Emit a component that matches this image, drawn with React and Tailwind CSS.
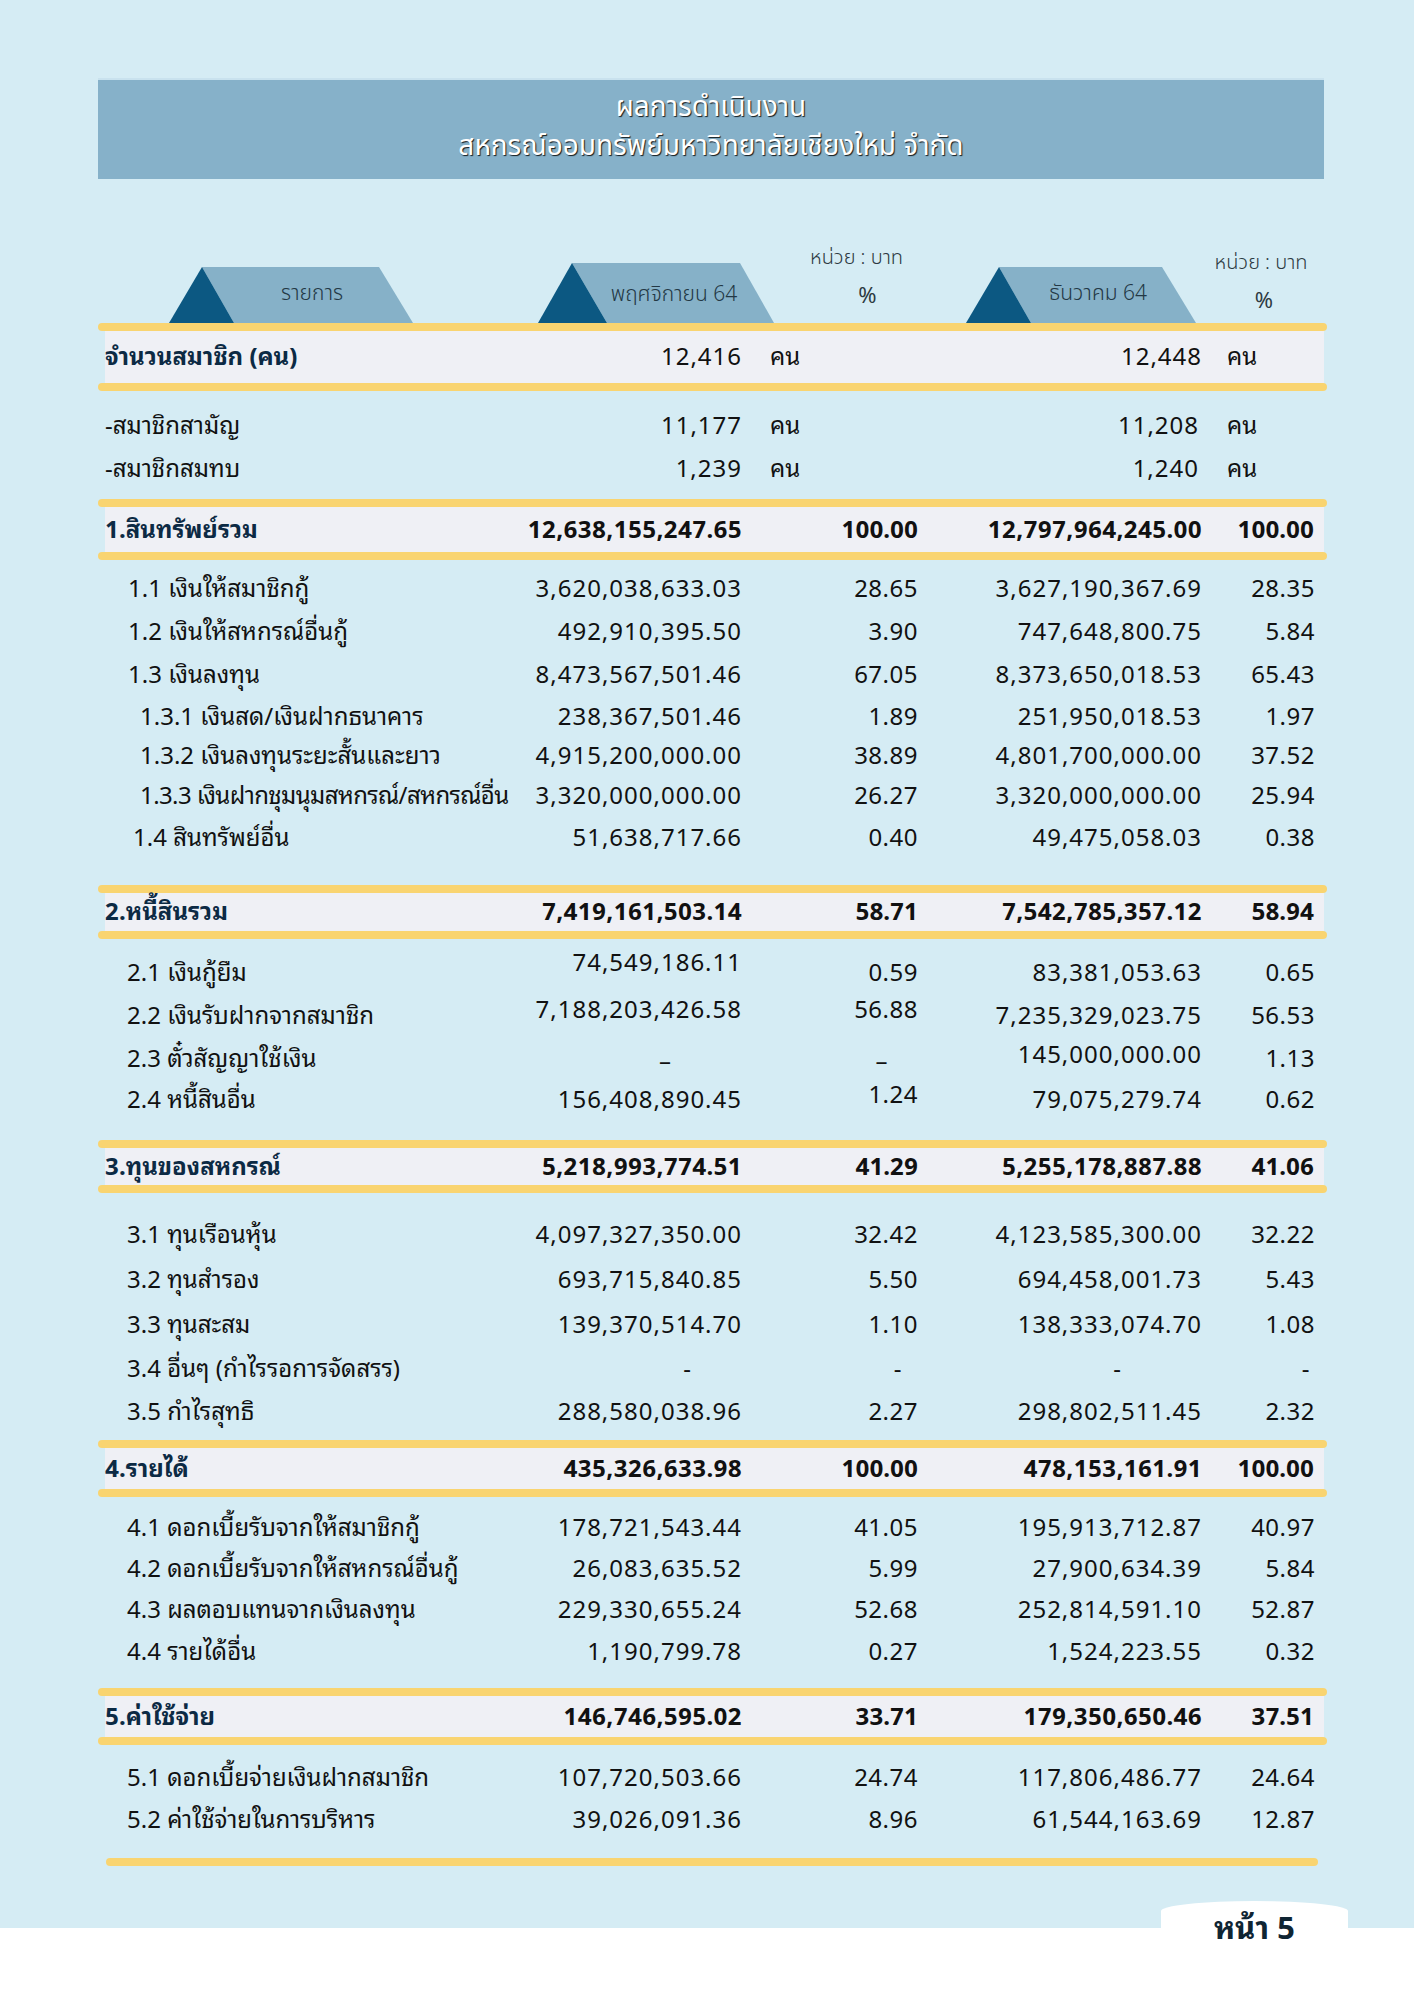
import React from "react";

const FONT = "font-['Noto_Sans_Thai_Looped','Loma','Garuda','Sarabun','Noto_Sans_Thai','Noto_Sans','Liberation_Sans',sans-serif]";
const HFONT = "font-['Noto_Sans_Thai','Noto_Sans','Liberation_Sans',sans-serif]";
const COLS = "grid grid-cols-[421px_216px_176px_284px_116px] items-center";

function Yellow({ cls = "" }) {
  return <div className={"h-[8px] rounded-full bg-[#f9d470] " + cls} />;
}

function Band({ h, label, a, pa, b, pb, unit }) {
  const num = unit ? "font-normal tracking-[1px]" : "tracking-[0.3px]";
  return (
    <div className={"ml-[7px] mr-[3px] bg-[#eff0f5] " + h}>
      <div className={COLS + " h-full pb-[6px] font-bold"}>
        <div className="text-[#0c2a44] whitespace-nowrap">{label}</div>
        <div className={"text-right text-[#111] " + num}>{a}</div>
        {unit ? (
          <div className="pl-[28px] font-normal text-[#111]">{pa}</div>
        ) : (
          <div className="text-right text-[#111]">{pa}</div>
        )}
        <div className={"text-right text-[#111] " + num}>{b}</div>
        {unit ? (
          <div className="pl-[25px] font-normal text-[#111]">{pb}</div>
        ) : (
          <div className="text-right pr-[4px] text-[#111]">{pb}</div>
        )}
      </div>
    </div>
  );
}

function Row({ h, label, indent = "", a, pa, b, pb, unit, ca = "", cpa = "", cb = "", cpb = "" }) {
  return (
    <div className={"ml-[7px] mr-[3px] " + h}>
      <div className={COLS + " h-full pb-[6px] text-[#111]"}>
        <div className={"whitespace-nowrap " + indent}>{label}</div>
        <div className={"text-right tracking-[1px] " + ca}>{a}</div>
        {unit ? (
          <div className={"pl-[28px] " + cpa}>{pa}</div>
        ) : (
          <div className={"text-right tracking-[0.5px] " + cpa}>{pa}</div>
        )}
        <div className={"text-right tracking-[1px] " + cb}>{b}</div>
        {unit ? (
          <div className={"pl-[25px] " + cpb}>{pb}</div>
        ) : (
          <div className={"text-right pr-[3px] tracking-[0.5px] " + cpb}>{pb}</div>
        )}
      </div>
    </div>
  );
}

function Tab({ w, h, text, tx, ty, dark }) {
  return (
    <div className="relative shrink-0" style={{ width: w, height: h }}>
      <svg className="absolute inset-0" width={w} height={h} viewBox={`0 0 ${w} ${h}`}>
        <polygon points={`${dark[1]},0 ${w - 34},0 ${w},${h} ${dark[2]},${h}`} fill="#86b1c8" />
        <polygon points={`0,${h} ${dark[1]},0 ${dark[2]},${h}`} fill="#0c5882" />
      </svg>
      <div
        className={"absolute text-[21px] font-light text-[#233845] whitespace-nowrap -translate-x-1/2 -translate-y-1/2 leading-none " + HFONT}
        style={{ left: tx, top: ty }}
      >
        {text}
      </div>
    </div>
  );
}

export default function App() {
  return (
    <div className={"w-[1414px] h-[2000px] bg-[#d5ecf4] flex flex-col text-[24px] leading-none " + FONT}>
      <div className="h-[78px] shrink-0" />
      {/* Banner */}
      <div className={"ml-[98px] w-[1226px] h-[101px] shrink-0 bg-[#86b1c9] border-t-2 border-[#c9e2ee] flex flex-col items-center justify-center gap-[11px] pb-[4px] text-white font-normal text-[28px] [text-shadow:1px_1px_1px_rgba(0,0,0,0.85)] " + HFONT}>
        <div>ผลการดำเนินงาน</div>
        <div>สหกรณ์ออมทรัพย์มหาวิทยาลัยเชียงใหม่ จำกัด</div>
      </div>
      {/* Header tabs */}
      <div className={"h-[144px] shrink-0 flex items-end ml-[169px] " + HFONT}>
        <Tab w={244} h={56} text="รายการ" tx={143} ty={26} dark={[0, 33, 65]} />
        <div className="w-[125px] shrink-0" />
        <Tab w={236} h={60} text="พฤศจิกายน 64" tx={136} ty={31} dark={[0, 34, 69]} />
        <div className="w-[33px] shrink-0" />
        <div className="w-[99px] shrink-0 h-[80px] flex flex-col items-center text-[#2d3a42] font-light">
          <div className="text-[20px] h-[30px] flex items-center">หน่วย : บาท</div>
          <div className="text-[22px] font-normal h-[30px] flex items-center ml-[22px] mt-[9px]">%</div>
        </div>
        <div className="w-[60px] shrink-0" />
        <Tab w={230} h={56} text="ธันวาคม  64" tx={132} ty={26} dark={[0, 33, 65]} />
        <div className="w-[16px] shrink-0" />
        <div className="w-[98px] shrink-0 h-[75px] flex flex-col items-center text-[#2d3a42] font-light">
          <div className="text-[20px] h-[30px] flex items-center">หน่วย : บาท</div>
          <div className="text-[22px] font-normal h-[30px] flex items-center ml-[6px] mt-[9px]">%</div>
        </div>
      </div>

      {/* Table */}
      <div className="ml-[98px] w-[1229px] flex flex-col">
        <Yellow />
        <Band h="h-[52px]" label="จำนวนสมาชิก (คน)" a="12,416" pa="คน" b="12,448" pb="คน" unit />
        <Yellow />
        <div className="h-[13px]" />
        <Row h="h-[43px]" label="-สมาชิกสามัญ" a="11,177" pa="คน" b="11,208" pb="คน" unit cb="pr-[3px]" />
        <Row h="h-[43px]" label="-สมาชิกสมทบ" a="1,239" pa="คน" b="1,240" pb="คน" unit cb="pr-[3px]" />
        <div className="h-[9px]" />

        <Yellow />
        <Band h="h-[45px]" label="1.สินทรัพย์รวม" a="12,638,155,247.65" pa="100.00" b="12,797,964,245.00" pb="100.00" />
        <Yellow />
        <div className="h-[7px]" />
        <Row h="h-[43px]" indent="pl-[23px]" label="1.1 เงินให้สมาชิกกู้" a="3,620,038,633.03" pa="28.65" b="3,627,190,367.69" pb="28.35" />
        <Row h="h-[43px]" indent="pl-[23px]" label="1.2 เงินให้สหกรณ์อื่นกู้" a="492,910,395.50" pa="3.90" b="747,648,800.75" pb="5.84" />
        <Row h="h-[43px]" indent="pl-[23px]" label="1.3 เงินลงทุน" a="8,473,567,501.46" pa="67.05" b="8,373,650,018.53" pb="65.43" />
        <Row h="h-[41px]" indent="pl-[35px]" label="1.3.1 เงินสด/เงินฝากธนาคาร" a="238,367,501.46" pa="1.89" b="251,950,018.53" pb="1.97" />
        <Row h="h-[38px]" indent="pl-[35px]" label="1.3.2 เงินลงทุนระยะสั้นและยาว" a="4,915,200,000.00" pa="38.89" b="4,801,700,000.00" pb="37.52" />
        <Row h="h-[41px]" indent="pl-[35px] tracking-[-0.6px]" label="1.3.3 เงินฝากชุมนุมสหกรณ์/สหกรณ์อื่น" a="3,320,000,000.00" pa="26.27" b="3,320,000,000.00" pb="25.94" />
        <Row h="h-[44px]" indent="pl-[28px]" label="1.4 สินทรัพย์อื่น" a="51,638,717.66" pa="0.40" b="49,475,058.03" pb="0.38" />
        <div className="h-[25px]" />

        <Yellow />
        <Band h="h-[38px]" label="2.หนี้สินรวม" a="7,419,161,503.14" pa="58.71" b="7,542,785,357.12" pb="58.94" />
        <Yellow />
        <div className="h-[9px]" />
        <Row h="h-[45px]" indent="pl-[22px]" label="2.1 เงินกู้ยืม" a="74,549,186.11" ca="pb-[20px]" pa="0.59" b="83,381,053.63" pb="0.65" />
        <Row h="h-[46px]" indent="pl-[22px]" label="2.2 เงินรับฝากจากสมาชิก" a="7,188,203,426.58" ca="pb-[12px]" pa="56.88" cpa="pb-[12px]" b="7,235,329,023.75" pb="56.53" />
        <Row h="h-[39px]" indent="pl-[22px]" label="2.3 ตั๋วสัญญาใช้เงิน" a="–" ca="pr-[70px] pt-[4px]" pa="–" cpa="pr-[30px] pt-[4px]" b="145,000,000.00" cb="pb-[8px]" pb="1.13" />
        <Row h="h-[43px]" indent="pl-[22px]" label="2.4 หนี้สินอื่น" a="156,408,890.45" pa="1.24" cpa="pb-[10px]" b="79,075,279.74" pb="0.62" />
        <div className="h-[19px]" />

        <Yellow />
        <Band h="h-[37px]" label="3.ทุนของสหกรณ์" a="5,218,993,774.51" pa="41.29" b="5,255,178,887.88" pb="41.06" />
        <Yellow />
        <div className="h-[20px]" />
        <Row h="h-[44px]" indent="pl-[22px]" label="3.1 ทุนเรือนหุ้น" a="4,097,327,350.00" pa="32.42" b="4,123,585,300.00" pb="32.22" />
        <Row h="h-[45px]" indent="pl-[22px]" label="3.2 ทุนสำรอง" a="693,715,840.85" pa="5.50" b="694,458,001.73" pb="5.43" />
        <Row h="h-[45px]" indent="pl-[22px]" label="3.3 ทุนสะสม" a="139,370,514.70" pa="1.10" b="138,333,074.70" pb="1.08" />
        <Row h="h-[43px]" indent="pl-[22px]" label="3.4 อื่นๆ (กำไรรอการจัดสรร)" a="-" ca="pr-[50px]" pa="-" cpa="pr-[16px]" b="-" cb="pr-[80px]" pb="-" cpb="pr-[8px]" />
        <Row h="h-[44px]" indent="pl-[22px]" label="3.5 กำไรสุทธิ" a="288,580,038.96" pa="2.27" b="298,802,511.45" pb="2.32" />
        <div className="h-[6px]" />

        <Yellow />
        <Band h="h-[41px]" label="4.รายได้" a="435,326,633.98" pa="100.00" b="478,153,161.91" pb="100.00" />
        <Yellow />
        <div className="h-[10px]" />
        <Row h="h-[41px]" indent="pl-[22px]" label="4.1 ดอกเบี้ยรับจากให้สมาชิกกู้" a="178,721,543.44" pa="41.05" b="195,913,712.87" pb="40.97" />
        <Row h="h-[41px]" indent="pl-[22px]" label="4.2 ดอกเบี้ยรับจากให้สหกรณ์อื่นกู้" a="26,083,635.52" pa="5.99" b="27,900,634.39" pb="5.84" />
        <Row h="h-[42px]" indent="pl-[22px]" label="4.3 ผลตอบแทนจากเงินลงทุน" a="229,330,655.24" pa="52.68" b="252,814,591.10" pb="52.87" />
        <Row h="h-[42px]" indent="pl-[22px]" label="4.4 รายได้อื่น" a="1,190,799.78" pa="0.27" b="1,524,223.55" pb="0.32" />
        <div className="h-[15px]" />

        <Yellow />
        <Band h="h-[41px]" label="5.ค่าใช้จ่าย" a="146,746,595.02" pa="33.71" b="179,350,650.46" pb="37.51" />
        <Yellow />
        <div className="h-[12px]" />
        <Row h="h-[42px]" indent="pl-[22px]" label="5.1 ดอกเบี้ยจ่ายเงินฝากสมาชิก" a="107,720,503.66" pa="24.74" b="117,806,486.77" pb="24.64" />
        <Row h="h-[42px]" indent="pl-[22px]" label="5.2 ค่าใช้จ่ายในการบริหาร" a="39,026,091.36" pa="8.96" b="61,544,163.69" pb="12.87" />
        <div className="h-[17px]" />
        <Yellow cls="ml-[8px] w-[1212px]" />
      </div>

      <div className="flex-1" />
      {/* Footer */}
      <div className="flex flex-col">
        <div className="ml-[1161px] w-[187px] h-[27px] bg-white rounded-t-[50%_10px]" />
        <div className="h-[72px] bg-white relative">
          <div className="absolute left-[1161px] w-[187px] -top-[18px] text-center text-[31px] font-bold text-[#0f2533]">
            หน้า 5
          </div>
        </div>
      </div>
    </div>
  );
}
